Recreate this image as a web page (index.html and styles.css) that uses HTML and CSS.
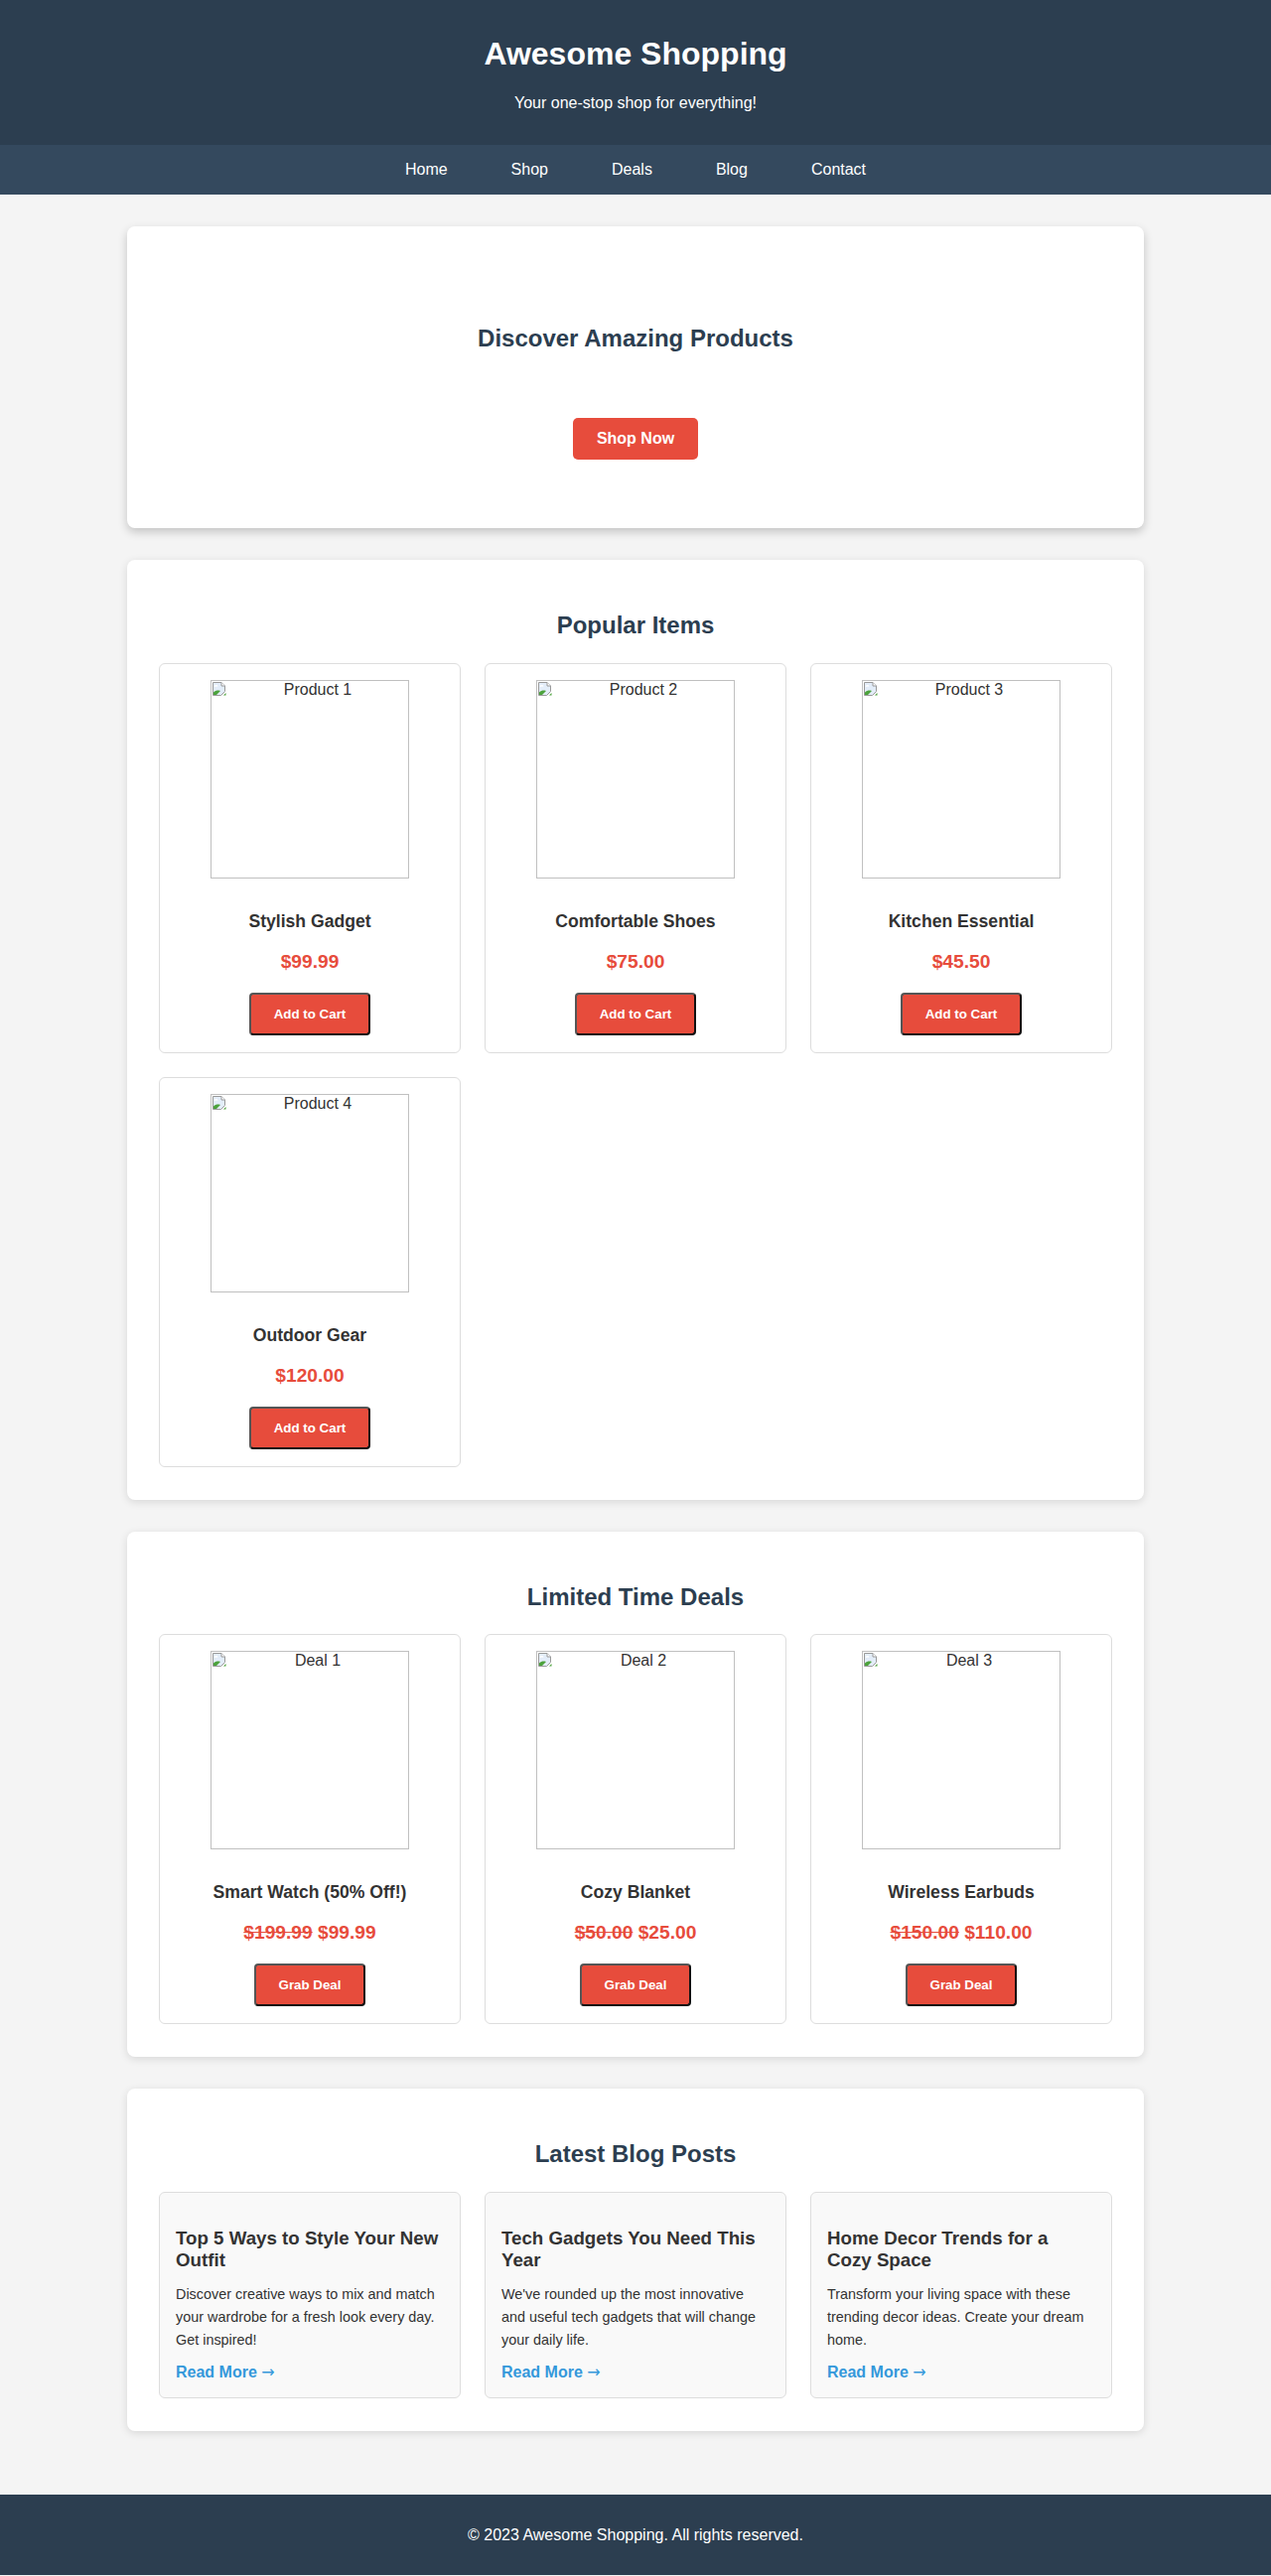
FILE: index.html
```html
<!DOCTYPE html>
<html lang="en">

<head>
    <meta charset="UTF-8">
    <meta name="viewport" content="width=device-width, initial-scale=1.0">
    <title>Awesome Shopping</title>
    <link rel="stylesheet" href="styles.css">
</head>

<body>
    <header class="site-header">
        <h1>Awesome Shopping</h1>
        <p>Your one-stop shop for everything!</p>
    </header>

    <nav class="main-nav">
        <a href="#">Home</a>
        <a href="#">Shop</a>
        <a href="#">Deals</a>
        <a href="#">Blog</a>
        <a href="#">Contact</a>
    </nav>

    <main class="container">
        <section class="panel hero">
            <h2>Discover Amazing Products</h2>
            <a href="#" class="btn-shop">Shop Now</a>
        </section>

        <section class="panel">
            <h2 class="section-title">Popular Items</h2>
            <div class="card-grid">
                <div class="item-card">
                    <div class="img-broken"><svg class="broken-icon" width="16" height="16" viewBox="0 0 16 16"><path d="M1.5 1.5h8.5l3.5 3.5v5.5l-4 4H1.5z" fill="#e3edf9" stroke="#9a9a9a"/><path d="M10 1.5V5h3.5" fill="#fff" stroke="#9a9a9a"/><path d="M3 5.5c1-1 2.5-1 3 0" fill="none" stroke="#fff" stroke-width="1.4"/><path d="M2 14V11.5c2-2 4.5-2.5 7-1.5L5 14z" fill="#4ca23c"/><path d="M14.5 12v2.5H12z" fill="#4ca23c"/></svg>Product 1</div>
                    <h3>Stylish Gadget</h3>
                    <p class="price">$99.99</p>
                    <button class="btn-cart">Add to Cart</button>
                </div>
                <div class="item-card">
                    <div class="img-broken"><svg class="broken-icon" width="16" height="16" viewBox="0 0 16 16"><path d="M1.5 1.5h8.5l3.5 3.5v5.5l-4 4H1.5z" fill="#e3edf9" stroke="#9a9a9a"/><path d="M10 1.5V5h3.5" fill="#fff" stroke="#9a9a9a"/><path d="M3 5.5c1-1 2.5-1 3 0" fill="none" stroke="#fff" stroke-width="1.4"/><path d="M2 14V11.5c2-2 4.5-2.5 7-1.5L5 14z" fill="#4ca23c"/><path d="M14.5 12v2.5H12z" fill="#4ca23c"/></svg>Product 2</div>
                    <h3>Comfortable Shoes</h3>
                    <p class="price">$75.00</p>
                    <button class="btn-cart">Add to Cart</button>
                </div>
                <div class="item-card">
                    <div class="img-broken"><svg class="broken-icon" width="16" height="16" viewBox="0 0 16 16"><path d="M1.5 1.5h8.5l3.5 3.5v5.5l-4 4H1.5z" fill="#e3edf9" stroke="#9a9a9a"/><path d="M10 1.5V5h3.5" fill="#fff" stroke="#9a9a9a"/><path d="M3 5.5c1-1 2.5-1 3 0" fill="none" stroke="#fff" stroke-width="1.4"/><path d="M2 14V11.5c2-2 4.5-2.5 7-1.5L5 14z" fill="#4ca23c"/><path d="M14.5 12v2.5H12z" fill="#4ca23c"/></svg>Product 3</div>
                    <h3>Kitchen Essential</h3>
                    <p class="price">$45.50</p>
                    <button class="btn-cart">Add to Cart</button>
                </div>
                <div class="item-card">
                    <div class="img-broken"><svg class="broken-icon" width="16" height="16" viewBox="0 0 16 16"><path d="M1.5 1.5h8.5l3.5 3.5v5.5l-4 4H1.5z" fill="#e3edf9" stroke="#9a9a9a"/><path d="M10 1.5V5h3.5" fill="#fff" stroke="#9a9a9a"/><path d="M3 5.5c1-1 2.5-1 3 0" fill="none" stroke="#fff" stroke-width="1.4"/><path d="M2 14V11.5c2-2 4.5-2.5 7-1.5L5 14z" fill="#4ca23c"/><path d="M14.5 12v2.5H12z" fill="#4ca23c"/></svg>Product 4</div>
                    <h3>Outdoor Gear</h3>
                    <p class="price">$120.00</p>
                    <button class="btn-cart">Add to Cart</button>
                </div>
            </div>
        </section>

        <section class="panel">
            <h2 class="section-title">Limited Time Deals</h2>
            <div class="card-grid">
                <div class="item-card">
                    <div class="img-broken"><svg class="broken-icon" width="16" height="16" viewBox="0 0 16 16"><path d="M1.5 1.5h8.5l3.5 3.5v5.5l-4 4H1.5z" fill="#e3edf9" stroke="#9a9a9a"/><path d="M10 1.5V5h3.5" fill="#fff" stroke="#9a9a9a"/><path d="M3 5.5c1-1 2.5-1 3 0" fill="none" stroke="#fff" stroke-width="1.4"/><path d="M2 14V11.5c2-2 4.5-2.5 7-1.5L5 14z" fill="#4ca23c"/><path d="M14.5 12v2.5H12z" fill="#4ca23c"/></svg>Deal 1</div>
                    <h3>Smart Watch (50% Off!)</h3>
                    <p class="price"><del>$199.99</del> $99.99</p>
                    <button class="btn-cart">Grab Deal</button>
                </div>
                <div class="item-card">
                    <div class="img-broken"><svg class="broken-icon" width="16" height="16" viewBox="0 0 16 16"><path d="M1.5 1.5h8.5l3.5 3.5v5.5l-4 4H1.5z" fill="#e3edf9" stroke="#9a9a9a"/><path d="M10 1.5V5h3.5" fill="#fff" stroke="#9a9a9a"/><path d="M3 5.5c1-1 2.5-1 3 0" fill="none" stroke="#fff" stroke-width="1.4"/><path d="M2 14V11.5c2-2 4.5-2.5 7-1.5L5 14z" fill="#4ca23c"/><path d="M14.5 12v2.5H12z" fill="#4ca23c"/></svg>Deal 2</div>
                    <h3>Cozy Blanket</h3>
                    <p class="price"><del>$50.00</del> $25.00</p>
                    <button class="btn-cart">Grab Deal</button>
                </div>
                <div class="item-card">
                    <div class="img-broken"><svg class="broken-icon" width="16" height="16" viewBox="0 0 16 16"><path d="M1.5 1.5h8.5l3.5 3.5v5.5l-4 4H1.5z" fill="#e3edf9" stroke="#9a9a9a"/><path d="M10 1.5V5h3.5" fill="#fff" stroke="#9a9a9a"/><path d="M3 5.5c1-1 2.5-1 3 0" fill="none" stroke="#fff" stroke-width="1.4"/><path d="M2 14V11.5c2-2 4.5-2.5 7-1.5L5 14z" fill="#4ca23c"/><path d="M14.5 12v2.5H12z" fill="#4ca23c"/></svg>Deal 3</div>
                    <h3>Wireless Earbuds</h3>
                    <p class="price"><del>$150.00</del> $110.00</p>
                    <button class="btn-cart">Grab Deal</button>
                </div>
            </div>
        </section>

        <section class="panel">
            <h2 class="section-title">Latest Blog Posts</h2>
            <div class="card-grid">
                <article class="blog-card">
                    <h3>Top 5 Ways to Style Your New Outfit</h3>
                    <p>Discover creative ways to mix and match your wardrobe for a fresh look every day. Get inspired!</p>
                    <a href="#" class="read-more">Read More <span class="arrow">&rarr;</span></a>
                </article>
                <article class="blog-card">
                    <h3>Tech Gadgets You Need This Year</h3>
                    <p>We've rounded up the most innovative and useful tech gadgets that will change your daily life.</p>
                    <a href="#" class="read-more">Read More <span class="arrow">&rarr;</span></a>
                </article>
                <article class="blog-card">
                    <h3>Home Decor Trends for a Cozy Space</h3>
                    <p>Transform your living space with these trending decor ideas. Create your dream home.</p>
                    <a href="#" class="read-more">Read More <span class="arrow">&rarr;</span></a>
                </article>
            </div>
        </section>
    </main>

    <footer class="site-footer">
        <p>&copy; 2023 Awesome Shopping. All rights reserved.</p>
    </footer>
</body>

</html>
```

FILE: styles.css
```css
* {
    box-sizing: border-box;
}

body {
    margin: 0;
    font-family: "Liberation Sans", Arial, sans-serif;
    line-height: 1.6;
    color: #333;
    background-color: #f4f4f4;
}

/* header + nav */
.site-header {
    background-color: #2c3e50;
    color: #fff;
    text-align: center;
    padding: 29px 0;
}

.site-header h1 {
    margin: 0;
    font-size: 32px;
    line-height: 51px;
}

.site-header p {
    margin: 11px 0 0;
    line-height: 26px;
}

.main-nav {
    background-color: #34495e;
    display: flex;
    justify-content: center;
    gap: 64px;
    padding: 12px 0;
    line-height: 26px;
}

.main-nav a {
    color: #fff;
    text-decoration: none;
}

/* main area */
.container {
    max-width: 1024px;
    margin: 0 auto;
    padding: 32px 0;
}

.panel {
    background-color: #fff;
    border-radius: 8px;
    padding: 32px 32px 33px;
    margin-bottom: 32px;
    box-shadow: 0 2px 8px rgba(0, 0, 0, 0.12);
}

.panel h2 {
    color: #2c3e50;
    font-size: 24px;
    line-height: 1.2;
    text-align: center;
    margin: 20px 0 23px;
}

.hero {
    display: flex;
    flex-direction: column;
    align-items: center;
    padding: 99px 32px 69px;
    box-shadow: 0 4px 10px rgba(0, 0, 0, 0.2);
}

.hero h2 {
    margin: 0 0 65px;
}

.btn-shop {
    display: block;
    background-color: #e74c3c;
    color: #fff;
    font-weight: bold;
    text-decoration: none;
    line-height: 18px;
    padding: 12px 24px;
    border-radius: 5px;
}

.card-grid {
    display: grid;
    grid-template-columns: repeat(3, 1fr);
    gap: 24px;
}

/* product / deal cards */
.item-card {
    display: flex;
    flex-direction: column;
    align-items: center;
    border: 1px solid #ddd;
    border-radius: 6px;
    padding: 16px 16px 17px;
}

.img-broken {
    width: 200px;
    height: 200px;
    border: 1px solid #c0c0c0;
    text-align: center;
    line-height: 18px;
}

.broken-icon {
    float: left;
}

.item-card h3 {
    margin: 29px 0 0;
    font-size: 17.6px;
    line-height: 28px;
}

.price {
    margin: 11px 0 0;
    color: #e74c3c;
    font-size: 19.2px;
    font-weight: bold;
    line-height: 31px;
}

.btn-cart {
    margin-top: 16px;
    background-color: #e74c3c;
    color: #fff;
    font-family: "Liberation Sans", Arial, sans-serif;
    font-size: 13.33px;
    font-weight: bold;
    line-height: 15px;
    padding: 12px 23px;
    border: 2px solid;
    border-color: #555 #111 #111 #555;
    border-radius: 4px;
    cursor: pointer;
}

/* blog */
.blog-card {
    background-color: #f9f9f9;
    border: 1px solid #ddd;
    border-radius: 6px;
    padding: 16px;
}

.blog-card h3 {
    margin: 19px 0 12px;
    font-size: 18.72px;
    line-height: 22px;
}

.blog-card p {
    margin: 0 0 12px;
    font-size: 14.4px;
    line-height: 1.6;
}

.read-more {
    display: block;
    color: #3498db;
    font-weight: bold;
    text-decoration: none;
    line-height: 18px;
}

.read-more .arrow {
    font-family: "DejaVu Sans", sans-serif;
    font-weight: normal;
}

.site-footer {
    background-color: #2c3e50;
    color: #fff;
    text-align: center;
    padding: 28px 0;
}

.site-footer p {
    margin: 0;
    line-height: 25px;
}
```
